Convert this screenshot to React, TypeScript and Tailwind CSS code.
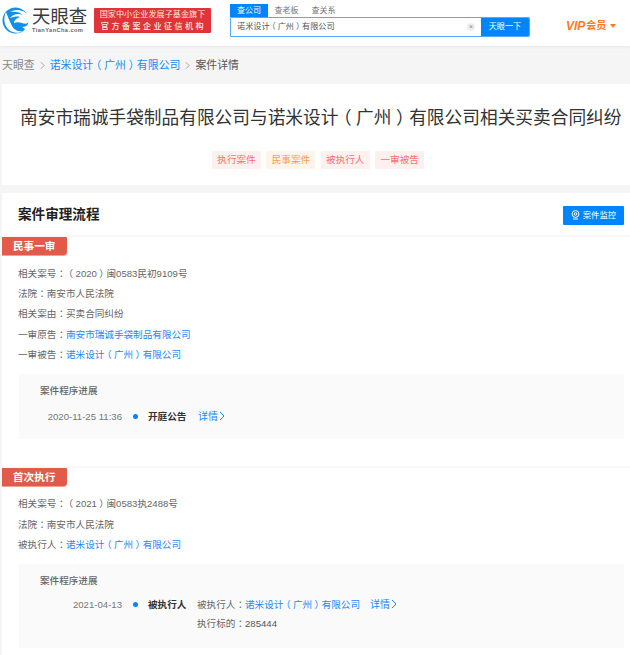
import React from "react";

const LINK = "text-[#1a88ff]";

function Logo() {
  return (
    <svg width="27" height="27" viewBox="0 0 27 27" className="shrink-0">
      <circle cx="13.5" cy="13.5" r="13" fill="#1190ea" />
      <path d="M27 9C23 3 14 1 8 5c5-1 10 0 13 3-5-2-10-1-13 3 3-1 7-2 10-1-3 1-6 3-6 6 2-1 5-1 8 0 3 1 5 1 7-1V9z" fill="#fff" />
      <path d="M4 5c-3 6-2 14 3 18 4 3 9 4 14 1-5 1-9-1-11-5C8 15 6 10 4 5z" fill="#fff" />
      <path d="M26 17c-1 2-3 3-6 3 2 1 3 2 3 3 2-1 3-4 3-6z" fill="#fff" />
    </svg>
  );
}

const Colon = () => <span className="font-['Noto_Sans_CJK_TC']">：</span>;
const L = () => <span className="px-[0.25em] [font-feature-settings:'halt']">（</span>;
const R = () => <span className="px-[0.25em] [font-feature-settings:'halt']">）</span>;
const Company = () => (
  <>
    诺米设计<L />广州<R />有限公司
  </>
);

function Row({ label, children }: { label: string; children: React.ReactNode }) {
  return (
    <div className="h-[20.4px] leading-[20.4px] text-[#666]">
      {label}
      <Colon />
      {children}
    </div>
  );
}

const A = ({ children }: { children: React.ReactNode }) => <span className={LINK}>{children}</span>;

function Tag({ label }: { label: string }) {
  return (
    <div className="w-[65px] h-[19px] bg-[#e25b4a] text-white font-bold text-[10.6px] leading-[19px] rounded-br-[4px] rounded-tr-[1px] border-b border-b-[#f0a090] pl-[11px]">
      {label}
    </div>
  );
}

function Chevron() {
  return (
    <svg viewBox="0 0 6 10" className="inline-block ml-[1px] align-[-1px] w-[6px] h-[10px]" fill="none" stroke="currentColor" strokeWidth="1">
      <path d="M1 1l4 4-4 4" />
    </svg>
  );
}

function Sep() {
  return (
    <svg viewBox="0 0 6 10" className="w-[5px] h-[9px] mx-[5px] text-[#999]" fill="none" stroke="currentColor" strokeWidth="1">
      <path d="M1 1l4 4-4 4" />
    </svg>
  );
}

export default function App() {
  return (
    <div className="w-[630px] h-[655px] overflow-hidden bg-[#f5f5f5] text-[9.6px] font-['Liberation_Sans','Noto_Sans_CJK_SC',sans-serif] [text-spacing-trim:space-all]">
      <header className="h-[46px] bg-white flex shadow-[0_1px_3px_rgba(0,0,0,0.06)] relative">
        <div className="ml-[2px] mt-[7px] flex items-start">
          <Logo />
          <div className="ml-[3px] w-[56px]">
            <div className="text-[18.4px] leading-[19px] text-[#3a3a3a]">天眼查</div>
            <div className="text-[5.6px] leading-[6px] text-[#666] tracking-[0.45px] font-bold mt-[1px]">TianYanCha.com</div>
          </div>
        </div>
        <div className="ml-[6px] mt-[8px] w-[117px] h-[25px] bg-[#e0333a] rounded-[1px] text-[#ffe8d8] text-center">
          <div className="text-[8.15px] leading-[12px] pt-[1px] whitespace-nowrap">国家中小企业发展子基金旗下</div>
          <div className="text-[8.15px] leading-[12px] tracking-[2.4px] pl-[2px] font-medium whitespace-nowrap">官方备案企业征信机构</div>
        </div>
        <div className="ml-[19px] mt-[4px] w-[300px]">
          <div className="flex h-[13px] text-[8px] leading-[13px] text-[#777]">
            <div className="w-[38px] bg-[#0084ff] text-white text-center">查公司</div>
            <div className="w-[37px] text-center">查老板</div>
            <div className="w-[37px] text-center">查关系</div>
          </div>
          <div className="flex h-[20px] border border-[#55aaff] rounded-[1px]">
            <div className="flex-1 flex items-center justify-between pl-[6px] pr-[6px] text-[#555] text-[8.15px]">
              <span><Company /></span>
              <span className="w-[8px] h-[8px] rounded-full bg-[#eee] text-[#888] text-[7px] leading-[8px] text-center">×</span>
            </div>
            <div className="w-[48px] bg-[#0084ff] text-white text-center text-[8.15px] leading-[18px] rounded-r-[1px]">天眼一下</div>
          </div>
        </div>
        <div className="ml-[36px] mt-[19px] h-[14px] flex items-center text-[#ff7a1a] font-bold text-[10px] leading-[14px]">
          <span className="text-[12px] italic">VIP</span>
          <span className="ml-[1px]">会员</span>
          <span className="ml-[4px] w-0 h-0 border-x-[3px] border-x-transparent border-t-[4px] border-t-[#ff7a1a]"></span>
        </div>
      </header>

      <nav className="h-[38px] flex items-center pl-[2px] text-[10.9px] text-[#888]">
        <span>天眼查</span>
        <Sep />
        <span className={LINK}><Company /></span>
        <Sep />
        <span className="text-[#555]">案件详情</span>
      </nav>

      <section className="ml-[2px] h-[101px] bg-white flex flex-col">
        <h1 className="mt-[22px] ml-[18px] h-[24px] text-[17.7px] leading-[24px] text-[#333] whitespace-nowrap">
          南安市瑞诚手袋制品有限公司与<Company />相关买卖合同纠纷
        </h1>
        <div className="mt-[21px] ml-[210px] flex gap-[5.4px] leading-[18px] text-center">
          <span className="w-[49px] h-[18px] rounded-[1px] bg-[#fff0f0] text-[#f8716c]">执行案件</span>
          <span className="w-[49px] h-[18px] rounded-[1px] bg-[#fff4eb] text-[#fa9a50]">民事案件</span>
          <span className="w-[49px] h-[18px] rounded-[1px] bg-[#fff0f0] text-[#f8716c]">被执行人</span>
          <span className="w-[49px] h-[18px] rounded-[1px] bg-[#fff0f0] text-[#f8716c]">一审被告</span>
        </div>
      </section>

      <section className="ml-[2px] mt-[8px] bg-white h-[470px]">
        <div className="h-[44px] pt-[2px] flex items-center justify-between pl-[16px] pr-[6px] border-b-2 border-b-[#f7f7f7]">
          <h2 className="text-[13.6px] font-bold text-[#222]">案件审理流程</h2>
          <button className="w-[61px] h-[19px] bg-[#0084ff] rounded-[1px] text-white flex items-center justify-center gap-[3px] text-[8.4px]">
            <svg width="9" height="10" viewBox="0 0 9 10" fill="none" stroke="#fff" strokeWidth="1">
              <circle cx="4.5" cy="4" r="3.4" />
              <circle cx="4.5" cy="4" r="1.3" />
              <path d="M2 9h5" />
            </svg>
            案件监控
          </button>
        </div>

        <div>
          <Tag label="民事一审" />
          <div className="pl-[16px] mt-[6.7px]">
            <Row label="相关案号"><L />2020<R />闽0583民初9109号</Row>
            <Row label="法院">南安市人民法院</Row>
            <Row label="相关案由">买卖合同纠纷</Row>
            <Row label="一审原告"><A>南安市瑞诚手袋制品有限公司</A></Row>
            <Row label="一审被告"><A><Company /></A></Row>
          </div>
          <div className="ml-[17px] mr-[6px] mt-[9.3px] h-[65px] bg-[#fafafa] pl-[21px] pt-[9px] text-[#666]">
            <div className="leading-[16px] font-medium">案件程序进展</div>
            <div className="flex mt-[10px] leading-[16px] items-center">
              <span className="w-[82px] text-right text-[#777]">2020-11-25 11:36</span>
              <span className="ml-[11px] w-[5px] h-[5px] rounded-full bg-[#0084ff]"></span>
              <span className="ml-[10px] w-[49px] font-bold text-[#333]">开庭公告</span>
              <span className={`ml-[1px] text-[10px] ${LINK}`}>详情<Chevron /></span>
            </div>
          </div>
        </div>

        <div className="mt-[27px] border-t-2 border-t-[#f7f7f7]">
          <Tag label="首次执行" />
          <div className="pl-[16px] mt-[6.5px]">
            <Row label="相关案号"><L />2021<R />闽0583执2488号</Row>
            <Row label="法院">南安市人民法院</Row>
            <Row label="被执行人"><A><Company /></A></Row>
          </div>
          <div className="ml-[17px] mr-[6px] mt-[9px] h-[84px] bg-[#fafafa] pl-[21px] pt-[9px] text-[#666]">
            <div className="leading-[16px] font-medium">案件程序进展</div>
            <div className="flex mt-[6px] leading-[19.5px]">
              <span className="w-[82px] text-right text-[#777]">2021-04-13</span>
              <span className="ml-[11px] mt-[7px] w-[5px] h-[5px] rounded-full bg-[#0084ff]"></span>
              <span className="ml-[10px] w-[49px] font-bold text-[#333]">被执行人</span>
              <div className="ml-0">
                <div>被执行人<Colon /><A><Company /></A><span className={`ml-[10px] text-[10px] ${LINK}`}>详情<Chevron /></span></div>
                <div>执行标的<Colon /><span className="text-[#555]">285444</span></div>
              </div>
            </div>
          </div>
        </div>
      </section>
    </div>
  );
}
